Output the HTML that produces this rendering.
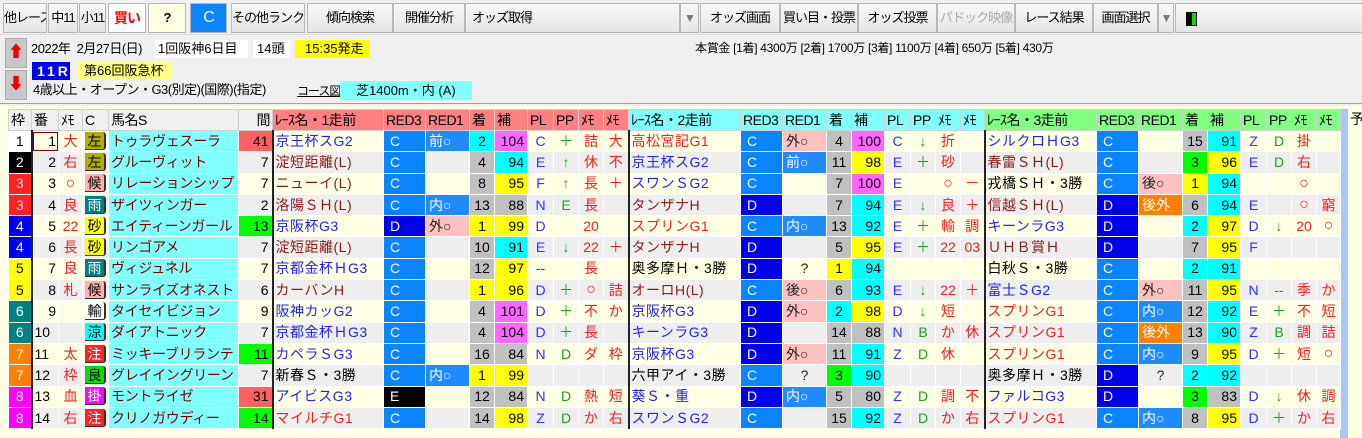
<!DOCTYPE html>
<html><head><meta charset="utf-8">
<style>
*{box-sizing:border-box}
body{margin:0;width:1362px;height:438px;overflow:hidden;background:#f0f0f0;font-family:"Liberation Sans","Noto Sans CJK JP",sans-serif;font-size:14px;color:#000;position:relative}
.btn{position:absolute;top:3px;height:30px;border:1px solid #b8b8b8;background:linear-gradient(#f8f8f8,#e6e6e6);text-align:center;line-height:28px;font-size:13px;letter-spacing:-1px;white-space:nowrap;overflow:hidden}
.abs{position:absolute;white-space:nowrap}
table{position:absolute;left:8px;top:109px;border-collapse:collapse;table-layout:fixed;width:1332px}
td{padding:0;height:21.3px;border:1px solid #fff;white-space:nowrap;overflow:hidden;line-height:19px}
tr.h td{height:21px;border-color:#d0d0d0;padding-left:2px;letter-spacing:-0.5px}
tr.o{background:#ffffe4}
tr.e{background:#eeeeee}
.hg{background:#f0f0f0}.hr{background:#ff8080}.hc{background:#80ffff}.hgn{background:#80ff80}
.r{text-align:right;padding-right:2px}
.rn{border-left:2px solid #222;padding-left:2px;letter-spacing:0.5px}
.bl{color:#2222ee}.dr{color:#8b1a1a}.rd{color:#f02020}.bk{color:#000}
.c3{background:#0a84ff;color:#fff;padding-left:6px}
.d3{background:#0000e8;color:#fff;padding-left:6px}
.e3{background:#000;color:#fff;padding-left:6px}
.rb{background:#1e8cff;color:#fff;padding-left:3px}
.rp{background:#ffc0c0;color:#222;padding-left:3px}
.ro{background:#ff8000;color:#fff;padding-left:3px}
.q{text-align:center;color:#222}
.y{background:#ffff00;text-align:center}.cy{background:#00ffff;text-align:center}.g{background:#00ff00;text-align:center}.gr{background:#c0c0c0;text-align:center}
.ym{background:#ffff00;text-align:right;padding-right:3px}.cm{background:#00ffff;text-align:right;padding-right:3px}.mm{background:#ff66ff;text-align:right;padding-right:3px}.gm{background:#c0c0c0;text-align:right;padding-right:3px}
.pl{color:#3030ff;text-align:center}.pp{color:#20a020;text-align:center}.me{color:#f02020;text-align:center}
.nm{background:#80ffff;color:#7a0000;padding-left:2px;letter-spacing:-0.3px}
.mk{color:#f02020;text-align:center}
.w1{background:#fff}.w2{background:#000;color:#fff}.w3{background:#ff2020;color:#ddd}.w4{background:#0000f0;color:#fff}.w5{background:#ffff00}.w6{background:#008080;color:#fff}.w7{background:#ff8000;color:#fff}.w8{background:#ff00ff;color:#fff}
.wk{text-align:center;border-right:2px solid #222}
.bd span{display:inline-block;width:21px;height:18px;line-height:18px;margin-left:2px;border-right:2px solid #333;border-bottom:1px solid #333;border-radius:0 3px 3px 0;text-align:center}
.ol{background:#b0b000}.pk{background:#ffb0b0}.tl{background:#008080;color:#fff}.yl{background:#ffff00}.wh{background:#fff}.cn{background:#00ffff}.re{background:#ff2020;color:#fff}.gn{background:#00e000}.mg{background:#ff00ff;color:#fff}
.kan{text-align:right;padding-right:3px}
.s{background:#ff6060}.gg{background:#00ff00}
.ci{font-size:16px;line-height:18px}
</style></head><body>
<div style="position:absolute;left:0;top:0;width:1362px;height:35px;background:#f0f0f0;border-bottom:1px solid #ddd"></div>
<div class="btn" style="left:3px;width:44px">他レース</div>
<div class="btn" style="left:48px;width:30px">中11</div>
<div class="btn" style="left:79px;width:27px">小11</div>
<div class="btn" style="left:108px;width:38px;background:#fff;color:#f00;font-weight:bold;font-size:14px">買い</div>
<div class="btn" style="left:148px;width:38px;background:#ffffe0;font-weight:bold">?</div>
<div class="btn" style="left:190px;width:37px;background:#0a84ff;color:#fff;font-size:16px">C</div>
<div class="btn" style="left:231px;width:74px">その他ランク</div>
<div class="btn" style="left:307px;width:86px">傾向検索</div>
<div class="btn" style="left:393px;width:72px">開催分析</div>
<div class="btn" style="left:465px;width:215px;text-align:left;padding-left:6px">オッズ取得</div>
<div class="btn" style="left:680px;width:19px;color:#777;font-size:12px">▼</div>
<div class="btn" style="left:700px;width:80px">オッズ画面</div>
<div class="btn" style="left:780px;width:78px">買い目・投票</div>
<div class="btn" style="left:858px;width:79px">オッズ投票</div>
<div class="btn" style="left:937px;width:78px;color:#aaa">パドック映像</div>
<div class="btn" style="left:1015px;width:78px">レース結果</div>
<div class="btn" style="left:1093px;width:65px">画面選択</div>
<div class="btn" style="left:1158px;width:16px;color:#777;font-size:12px">▼</div>
<div class="btn" style="left:1175px;width:190px;text-align:left;padding-left:10px"><span style="display:inline-block;width:5px;height:14px;background:#000;vertical-align:middle"></span><span style="display:inline-block;width:6px;height:14px;background:#00e000;border:1px solid #000;vertical-align:middle"></span></div>

<div class="abs" style="left:5px;top:38px;width:22px;height:30px;background:#c8c8c8;border:1px solid #aaa;color:#e00;text-align:center;line-height:28px;font-size:16px">⬆</div>
<div class="abs" style="left:5px;top:70px;width:22px;height:30px;background:#c8c8c8;border:1px solid #aaa;color:#e00;text-align:center;line-height:28px;font-size:16px">⬇</div>
<div class="abs" style="left:31px;top:39px;line-height:20px;font-size:13px;letter-spacing:-0.5px">2022年&nbsp;&nbsp;2月27日(日)</div>
<div class="abs" style="left:155px;top:40px;width:93px;height:18px;background:#fff;line-height:18px;padding-left:3px;font-size:13px">1回阪神6日目</div>
<div class="abs" style="left:253px;top:40px;width:37px;height:18px;background:#fff;line-height:18px;padding-left:4px;font-size:13px">14頭</div>
<div class="abs" style="left:295px;top:40px;width:75px;height:18px;background:#ffff00;line-height:18px;padding-left:10px;font-size:13px">15:35発走</div>
<div class="abs" style="left:32px;top:62px;width:38px;height:18px;background:#0000f0;color:#fff;line-height:18px;font-weight:bold;font-size:14px;padding-left:5px;letter-spacing:3px">11R</div>
<div class="abs" style="left:77px;top:62px;width:95px;height:18px;background:#ffff80;line-height:18px;padding-left:7px;font-size:13px">第66回阪急杯</div>
<div class="abs" style="left:33px;top:80px;line-height:20px;font-size:13px;letter-spacing:-0.5px">4歳以上・オープン・G3(別定)(国際)(指定)</div>
<div class="abs" style="left:297px;top:81px;line-height:20px;text-decoration:underline;font-size:12px;letter-spacing:-1px">コース図</div>
<div class="abs" style="left:340px;top:81px;width:132px;height:19px;background:#80ffff;line-height:19px;padding-left:16px;font-size:13px">芝1400m・内 (A)</div>
<div class="abs" style="left:695px;top:38px;line-height:20px;font-size:12px;letter-spacing:-0.3px">本賞金 [1着] 4300万 [2着] 1700万 [3着] 1100万 [4着] 650万 [5着] 430万</div>
<div class="abs" style="left:0;top:103px;width:1362px;height:1px;background:#a0a0a0"></div>
<div class="abs" style="left:0;top:106px;width:1362px;height:332px;background:#ffffe4"></div>
<div class="abs" style="left:1340px;top:109px;width:8px;height:329px;background:#a8c8f0"></div>
<div class="abs" style="left:1350px;top:109px;line-height:20px">予</div>

<table>
<colgroup><col style="width:23px"><col style="width:27px"><col style="width:24px"><col style="width:26px"><col style="width:130px"><col style="width:34px">
<col style="width:111px"><col style="width:42px"><col style="width:44px"><col style="width:25px"><col style="width:33px"><col style="width:26px"><col style="width:25px"><col style="width:25px"><col style="width:25px">
<col style="width:112px"><col style="width:42px"><col style="width:44px"><col style="width:25px"><col style="width:33px"><col style="width:26px"><col style="width:25px"><col style="width:25px"><col style="width:24px">
<col style="width:112px"><col style="width:42px"><col style="width:44px"><col style="width:25px"><col style="width:33px"><col style="width:26px"><col style="width:25px"><col style="width:25px"><col style="width:24px"></colgroup>
<tr class="h"><td class="hg">枠</td><td class="hg">番</td><td class="hg">ﾒﾓ</td><td class="hg">C</td><td class="hg">馬名S</td><td class="hg r">間</td>
<td class="hr">ﾚｰｽ名・1走前</td><td class="hr">RED3</td><td class="hr">RED1</td><td class="hr">着</td><td class="hr">補</td><td class="hr">PL</td><td class="hr">PP</td><td class="hr">ﾒﾓ</td><td class="hr">ﾒﾓ</td>
<td class="hc">ﾚｰｽ名・2走前</td><td class="hc">RED3</td><td class="hc">RED1</td><td class="hc">着</td><td class="hc">補</td><td class="hc">PL</td><td class="hc">PP</td><td class="hc">ﾒﾓ</td><td class="hc">ﾒﾓ</td>
<td class="hgn">ﾚｰｽ名・3走前</td><td class="hgn">RED3</td><td class="hgn">RED1</td><td class="hgn">着</td><td class="hgn">補</td><td class="hgn">PL</td><td class="hgn">PP</td><td class="hgn">ﾒﾓ</td><td class="hgn">ﾒﾓ</td></tr>

<tr class="o"><td class="wk w1">1</td><td class="r" style="outline:1px solid #800000;outline-offset:-2px">1</td><td class="mk">大</td><td class="bd"><span class="ol">左</span></td><td class="nm">トゥラヴェスーラ</td><td class="kan s">41</td>
<td class="rn bl">京王杯スG2</td><td class="c3">C</td><td class="rb">前○</td><td class="cy">2</td><td class="mm">104</td><td class="pl">C</td><td class="pp">＋</td><td class="me">詰</td><td class="me">大</td>
<td class="rn rd">高松宮記G1</td><td class="c3">C</td><td class="rp">外○</td><td class="gr">4</td><td class="mm">100</td><td class="pl">C</td><td class="pp">↓</td><td class="me">折</td><td></td>
<td class="rn bl">シルクロＨG3</td><td class="c3">C</td><td></td><td class="gr">15</td><td class="cm">91</td><td class="pl">Z</td><td class="pp">D</td><td class="me">掛</td><td></td></tr>

<tr class="e"><td class="wk w2">2</td><td class="r">2</td><td class="mk">右</td><td class="bd"><span class="ol">左</span></td><td class="nm">グルーヴィット</td><td class="kan">7</td>
<td class="rn dr">淀短距離(L)</td><td class="c3">C</td><td></td><td class="gr">4</td><td class="cm">94</td><td class="pl">E</td><td class="pp">↑</td><td class="me">休</td><td class="me">不</td>
<td class="rn bl">京王杯スG2</td><td class="c3">C</td><td class="rb">前○</td><td class="gr">11</td><td class="ym">98</td><td class="pl">E</td><td class="pp">＋</td><td class="me">砂</td><td></td>
<td class="rn dr">春雷ＳＨ(L)</td><td class="c3">C</td><td></td><td class="g">3</td><td class="ym">96</td><td class="pl">E</td><td class="pp">D</td><td class="me">右</td><td></td></tr>

<tr class="o"><td class="wk w3">3</td><td class="r">3</td><td class="mk ci">○</td><td class="bd"><span class="pk">候</span></td><td class="nm">リレーションシップ</td><td class="kan">7</td>
<td class="rn dr">ニューイ(L)</td><td class="c3">C</td><td></td><td class="gr">8</td><td class="ym">95</td><td class="pl">F</td><td class="pp">↑</td><td class="me">長</td><td class="me">＋</td>
<td class="rn bl">スワンＳG2</td><td class="c3">C</td><td></td><td class="gr">7</td><td class="mm">100</td><td class="pl">E</td><td></td><td class="me ci">○</td><td class="me">－</td>
<td class="rn bk">戎橋ＳＨ・3勝</td><td class="c3">C</td><td class="rp">後○</td><td class="y">1</td><td class="cm">94</td><td></td><td></td><td class="me ci">○</td><td></td></tr>

<tr class="e"><td class="wk w3">3</td><td class="r">4</td><td class="mk">良</td><td class="bd"><span class="tl">雨</span></td><td class="nm">ザイツィンガー</td><td class="kan">2</td>
<td class="rn dr">洛陽ＳＨ(L)</td><td class="c3">C</td><td class="rb">内○</td><td class="gr">13</td><td class="gm">88</td><td class="pl">N</td><td class="pp">E</td><td class="me">長</td><td></td>
<td class="rn dr">タンザナH</td><td class="d3">D</td><td></td><td class="gr">7</td><td class="cm">94</td><td class="pl">E</td><td class="pp">↓</td><td class="me">良</td><td class="me">＋</td>
<td class="rn dr">信越ＳＨ(L)</td><td class="d3">D</td><td class="ro">後外</td><td class="gr">6</td><td class="cm">94</td><td class="pl">E</td><td></td><td class="me ci">○</td><td class="me">窮</td></tr>

<tr class="o"><td class="wk w4">4</td><td class="r">5</td><td class="mk">22</td><td class="bd"><span class="yl">砂</span></td><td class="nm">エイティーンガール</td><td class="kan gg">13</td>
<td class="rn bl">京阪杯G3</td><td class="d3">D</td><td class="rp">外○</td><td class="y">1</td><td class="ym">99</td><td class="pl">D</td><td></td><td class="me">20</td><td></td>
<td class="rn rd">スプリンG1</td><td class="c3">C</td><td class="rb">内○</td><td class="gr">13</td><td class="cm">92</td><td class="pl">E</td><td class="pp">＋</td><td class="me">輸</td><td class="me">調</td>
<td class="rn bl">キーンラG3</td><td class="d3">D</td><td></td><td class="cy">2</td><td class="ym">97</td><td class="pl">D</td><td class="pp">↓</td><td class="me">20</td><td class="me ci">○</td></tr>

<tr class="e"><td class="wk w4">4</td><td class="r">6</td><td class="mk">長</td><td class="bd"><span class="yl">砂</span></td><td class="nm">リンゴアメ</td><td class="kan">7</td>
<td class="rn dr">淀短距離(L)</td><td class="c3">C</td><td></td><td class="gr">10</td><td class="cm">91</td><td class="pl">E</td><td class="pp">↓</td><td class="me">22</td><td class="me">＋</td>
<td class="rn dr">タンザナH</td><td class="d3">D</td><td></td><td class="gr">5</td><td class="ym">95</td><td class="pl">E</td><td class="pp">＋</td><td class="me">22</td><td class="me">03</td>
<td class="rn dr">ＵＨＢ賞Ｈ</td><td class="d3">D</td><td></td><td class="gr">7</td><td class="ym">95</td><td class="pl">F</td><td></td><td></td><td></td></tr>

<tr class="o"><td class="wk w5">5</td><td class="r">7</td><td class="mk">良</td><td class="bd"><span class="tl">雨</span></td><td class="nm">ヴィジュネル</td><td class="kan">7</td>
<td class="rn bl">京都金杯ＨG3</td><td class="c3">C</td><td></td><td class="gr">12</td><td class="ym">97</td><td class="pl">--</td><td></td><td class="me">長</td><td></td>
<td class="rn bk">奥多摩Ｈ・3勝</td><td class="d3">D</td><td class="q">?</td><td class="y">1</td><td class="cm">94</td><td></td><td></td><td></td><td></td>
<td class="rn bk">白秋Ｓ・3勝</td><td class="c3">C</td><td></td><td class="cy">2</td><td class="cm">91</td><td></td><td></td><td></td><td></td></tr>

<tr class="e"><td class="wk w5">5</td><td class="r">8</td><td class="mk">札</td><td class="bd"><span class="pk">候</span></td><td class="nm">サンライズオネスト</td><td class="kan">6</td>
<td class="rn dr">カーバンH</td><td class="c3">C</td><td></td><td class="y">1</td><td class="ym">96</td><td class="pl">D</td><td class="pp">＋</td><td class="me ci">○</td><td class="me">詰</td>
<td class="rn dr">オーロH(L)</td><td class="c3">C</td><td class="rp">後○</td><td class="gr">6</td><td class="cm">93</td><td class="pl">E</td><td class="pp">↓</td><td class="me">22</td><td class="me">＋</td>
<td class="rn bl">富士ＳG2</td><td class="c3">C</td><td class="rp">外○</td><td class="gr">11</td><td class="ym">95</td><td class="pl">N</td><td class="pp">--</td><td class="me">季</td><td class="me">か</td></tr>

<tr class="o"><td class="wk w6">6</td><td class="r">9</td><td></td><td class="bd"><span class="wh">輸</span></td><td class="nm">タイセイビジョン</td><td class="kan">9</td>
<td class="rn bl">阪神カッG2</td><td class="c3">C</td><td></td><td class="gr">4</td><td class="mm">101</td><td class="pl">D</td><td class="pp">＋</td><td class="me">不</td><td class="me">か</td>
<td class="rn bl">京阪杯G3</td><td class="d3">D</td><td class="rp">外○</td><td class="cy">2</td><td class="ym">98</td><td class="pl">D</td><td class="pp">↓</td><td class="me">短</td><td></td>
<td class="rn rd">スプリンG1</td><td class="c3">C</td><td class="rb">内○</td><td class="gr">12</td><td class="cm">92</td><td class="pl">E</td><td class="pp">＋</td><td class="me">不</td><td class="me">短</td></tr>

<tr class="e"><td class="wk w6">6</td><td style="padding-left:2px">10</td><td></td><td class="bd"><span class="cn">涼</span></td><td class="nm">ダイアトニック</td><td class="kan">7</td>
<td class="rn bl">京都金杯ＨG3</td><td class="c3">C</td><td></td><td class="gr">4</td><td class="mm">104</td><td class="pl">D</td><td class="pp">＋</td><td class="me">長</td><td></td>
<td class="rn bl">キーンラG3</td><td class="d3">D</td><td></td><td class="gr">14</td><td class="gm">88</td><td class="pl">N</td><td class="pp">B</td><td class="me">か</td><td class="me">休</td>
<td class="rn rd">スプリンG1</td><td class="c3">C</td><td class="ro">後外</td><td class="gr">13</td><td class="cm">90</td><td class="pl">Z</td><td class="pp">B</td><td class="me">調</td><td class="me">詰</td></tr>

<tr class="o"><td class="wk w7">7</td><td style="padding-left:2px">11</td><td class="mk">太</td><td class="bd"><span class="re">注</span></td><td class="nm">ミッキーブリランテ</td><td class="kan gg">11</td>
<td class="rn bl">カペラＳG3</td><td class="c3">C</td><td></td><td class="gr">16</td><td class="gm">84</td><td class="pl">N</td><td class="pp">D</td><td class="me">ダ</td><td class="me">枠</td>
<td class="rn bl">京阪杯G3</td><td class="d3">D</td><td class="rp">外○</td><td class="gr">11</td><td class="cm">91</td><td class="pl">Z</td><td class="pp">D</td><td class="me">休</td><td></td>
<td class="rn rd">スプリンG1</td><td class="c3">C</td><td class="rb">内○</td><td class="gr">9</td><td class="ym">95</td><td class="pl">D</td><td class="pp">＋</td><td class="me">短</td><td class="me ci">○</td></tr>

<tr class="e"><td class="wk w7">7</td><td style="padding-left:2px">12</td><td class="mk">枠</td><td class="bd"><span class="gn">良</span></td><td class="nm">グレイイングリーン</td><td class="kan">7</td>
<td class="rn bk">新春Ｓ・3勝</td><td class="c3">C</td><td class="rb">内○</td><td class="y">1</td><td class="ym">99</td><td></td><td></td><td></td><td></td>
<td class="rn bk">六甲アイ・3勝</td><td class="c3">C</td><td class="q">?</td><td class="g">3</td><td class="cm">90</td><td></td><td></td><td></td><td></td>
<td class="rn bk">奥多摩Ｈ・3勝</td><td class="d3">D</td><td class="q">?</td><td class="cy">2</td><td class="cm">92</td><td></td><td></td><td></td><td></td></tr>

<tr class="o"><td class="wk w8">8</td><td style="padding-left:2px">13</td><td class="mk">血</td><td class="bd"><span class="mg">掛</span></td><td class="nm">モントライゼ</td><td class="kan s">31</td>
<td class="rn bl">アイビスG3</td><td class="e3">E</td><td></td><td class="gr">12</td><td class="gm">84</td><td class="pl">N</td><td class="pp">D</td><td class="me">熱</td><td class="me">短</td>
<td class="rn bl">葵Ｓ・重</td><td class="d3">D</td><td class="rb">内○</td><td class="gr">5</td><td class="gm">80</td><td class="pl">Z</td><td class="pp">D</td><td class="me">調</td><td class="me">不</td>
<td class="rn bl">ファルコG3</td><td class="d3">D</td><td></td><td class="g">3</td><td class="gm">83</td><td class="pl">D</td><td class="pp">↓</td><td class="me">休</td><td class="me">調</td></tr>

<tr class="e"><td class="wk w8">8</td><td style="padding-left:2px">14</td><td class="mk">右</td><td class="bd"><span class="re">注</span></td><td class="nm">クリノガウディー</td><td class="kan gg">14</td>
<td class="rn rd">マイルチG1</td><td class="c3">C</td><td></td><td class="gr">14</td><td class="ym">98</td><td class="pl">Z</td><td class="pp">D</td><td class="me">か</td><td class="me">右</td>
<td class="rn bl">スワンＳG2</td><td class="c3">C</td><td></td><td class="gr">15</td><td class="cm">92</td><td class="pl">Z</td><td class="pp">D</td><td class="me">か</td><td class="me">右</td>
<td class="rn rd">スプリンG1</td><td class="c3">C</td><td class="rb">内○</td><td class="gr">8</td><td class="ym">95</td><td class="pl">D</td><td class="pp">＋</td><td class="me">か</td><td class="me">右</td></tr>
</table>
</body></html>
